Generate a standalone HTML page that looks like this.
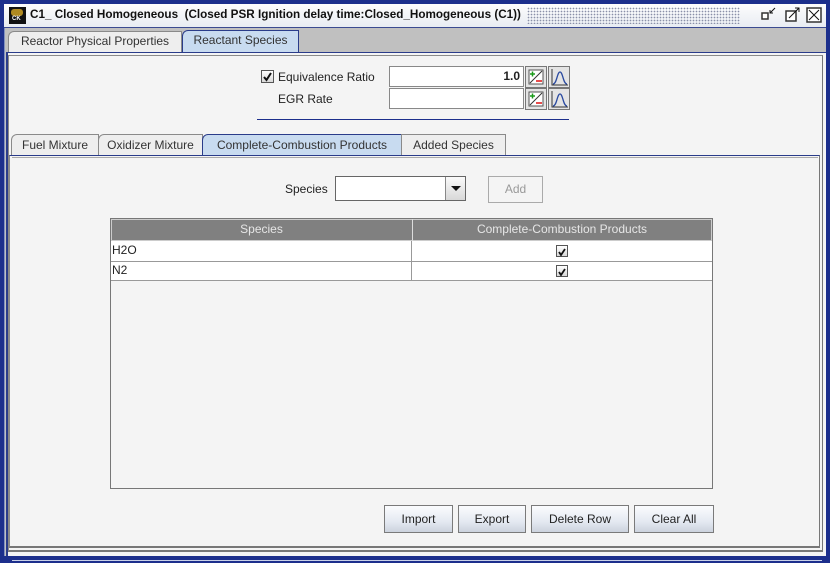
<!DOCTYPE html>
<html><head><meta charset="utf-8"><style>
*{box-sizing:border-box;margin:0;padding:0}
body{width:830px;height:563px;overflow:hidden;background:#1c2f8c;font-family:"Liberation Sans",Arial,sans-serif;font-size:12px;color:#222;position:relative}
.a{position:absolute}
.btn{position:absolute;border:1px solid #7a7a7a;background:linear-gradient(#fbfcfe,#e4e9f1 60%,#ccd3de);text-align:center;color:#222}
.tab{position:absolute;border:1px solid #8a8a8a;border-bottom:none;background:#eeeeee;text-align:center;color:#333;border-top-left-radius:6px 6px}
.cb{position:absolute;width:12px;height:12px;border:1px solid #555;background:linear-gradient(#fff,#d8d8d8)}
</style></head><body>
<div class="a" style="left:4px;top:4px;width:822px;height:553px;background:#c0c0c0;border-left:1px solid #8090c0"></div>
<div class="a" style="left:4px;top:4px;width:822px;height:24px;background:linear-gradient(#fdfdfd,#e8ecf2);border-bottom:1px solid #3a4a90"></div>
<div class="a" style="left:9px;top:7px;width:17px;height:17px;background:#111"><div class="a" style="left:2px;top:2px;width:12px;height:7px;background:#b08a20;border-radius:3px"></div><div class="a" style="left:3px;top:9px;font-size:6px;color:#fff;font-weight:bold">CK</div></div>
<div class="a" style="left:30px;top:8px;font-weight:bold;font-size:11.7px;color:#111;white-space:pre">C1_ Closed Homogeneous  (Closed PSR Ignition delay time:Closed_Homogeneous (C1))</div>
<div class="a" style="left:527px;top:7px;width:213px;height:17px;background-image:radial-gradient(#8a90a8 0.7px,transparent 0.9px);background-size:3px 3px"></div>
<svg class="a" style="left:760px;top:5px" width="65" height="20"><rect x="2" y="8" width="6" height="6" fill="#fff" stroke="#333" stroke-width="1.5"/><path d="M15 3 L10 8 M10 5 V8 H13" stroke="#111" fill="none"/><rect x="26" y="6" width="10" height="10" fill="#fff" stroke="#333" stroke-width="1.5"/><path d="M29 13 L39 3 M35 3 H39 V7" stroke="#111" fill="none"/><rect x="47" y="3" width="14" height="14" fill="#fff" stroke="#333" stroke-width="1.5"/><path d="M49 5 L59 15 M59 5 L49 15" stroke="#111"/></svg>
<div class="tab" style="left:8px;top:31px;width:174px;height:22px;line-height:19px;background:#eee;color:#333">Reactor Physical Properties</div>
<div class="tab" style="left:182px;top:30px;width:117px;height:22px;line-height:19px;background:#c8dbf0;border-color:#2a3c8a">Reactant Species</div>
<div class="a" style="left:6px;top:52px;width:820px;height:504px;background:#f4f4f4;border-top:1px solid #2a3c8a;border-left:2px solid #2a3c8a"></div>
<div class="a" style="left:8px;top:55px;width:815px;height:497px;border:1px solid #8a8a8a;border-right-color:#777;border-bottom:2px solid #777"></div>
<div class="cb" style="left:261px;top:70px;width:13px;height:13px"><svg width="11" height="11"><path d="M2 6 L4.5 9 L9 2" stroke="#111" stroke-width="2" fill="none"/></svg></div>
<div class="a" style="left:278px;top:70px">Equivalence Ratio</div>
<div class="a" style="left:278px;top:92px">EGR Rate</div>
<div class="a" style="left:389px;top:66px;width:135px;height:21px;background:#fff;border:1px solid #888;text-align:right;padding-right:3px;line-height:19px;font-weight:bold">1.0</div>
<div class="a" style="left:389px;top:88px;width:135px;height:21px;background:#fff;border:1px solid #888"></div>
<svg class="a" style="left:525px;top:66px" width="46" height="44">
<g><rect x="0.5" y="0.5" width="21" height="21" fill="#e4e4e4" stroke="#777"/><rect x="4" y="4" width="14" height="14" fill="#fff" stroke="#555"/><path d="M5 17 L17 5" stroke="#333"/><path d="M5 8 H10 M7.5 5.5 V10.5" stroke="#1a9a1a" stroke-width="1.5"/><path d="M11 15 H17" stroke="#e01010" stroke-width="1.5"/>
<rect x="23.5" y="0.5" width="21" height="21" fill="#e4e4e4" stroke="#777"/><path d="M27 3 V19 H43" stroke="#333" fill="none"/><path d="M28 18 C32 18 32 6 35 6 C38 6 38 18 42 18" stroke="#2a4aa0" stroke-width="1.3" fill="none"/></g>
<g transform="translate(0,22)"><rect x="0.5" y="0.5" width="21" height="21" fill="#e4e4e4" stroke="#777"/><rect x="4" y="4" width="14" height="14" fill="#fff" stroke="#555"/><path d="M5 17 L17 5" stroke="#333"/><path d="M5 8 H10 M7.5 5.5 V10.5" stroke="#1a9a1a" stroke-width="1.5"/><path d="M11 15 H17" stroke="#e01010" stroke-width="1.5"/>
<rect x="23.5" y="0.5" width="21" height="21" fill="#e4e4e4" stroke="#777"/><path d="M27 3 V19 H43" stroke="#333" fill="none"/><path d="M28 18 C32 18 32 6 35 6 C38 6 38 18 42 18" stroke="#2a4aa0" stroke-width="1.3" fill="none"/></g>
</svg>
<div class="a" style="left:257px;top:119px;width:312px;height:1px;background:#1c2f8c"></div>
<div class="tab" style="left:11px;top:134px;width:88px;height:22px;line-height:20px">Fuel Mixture</div>
<div class="tab" style="left:98px;top:134px;width:105px;height:22px;line-height:20px">Oxidizer Mixture</div>
<div class="tab" style="left:202px;top:134px;width:200px;height:22px;line-height:20px;background:#c8dbf0;border-color:#2a3c8a">Complete-Combustion Products</div>
<div class="tab" style="left:401px;top:134px;width:105px;height:22px;line-height:20px;border-radius:0">Added Species</div>
<div class="a" style="left:9px;top:155px;width:811px;height:393px;border-top:1px solid #2a3c8a;border-left:1px solid #8a8a8a;border-right:1px solid #777;border-bottom:2px solid #777;background:#f4f4f4"></div>
<div class="a" style="left:12px;top:157px;width:806px;height:1px;background:#aaa"></div>
<div class="a" style="left:285px;top:182px">Species</div>
<div class="a" style="left:335px;top:176px;width:131px;height:25px;background:#fff;border:1px solid #666"></div>
<div class="a" style="left:445px;top:177px;width:20px;height:23px;background:linear-gradient(#fafafa,#d8d8d8);border-left:1px solid #888"><svg width="20" height="23"><path d="M5 9 H15 L10 14 Z" fill="#111"/></svg></div>
<div class="a" style="left:488px;top:176px;width:55px;height:27px;border:1px solid #aaa;background:#f4f4f4;color:#999;text-align:center;line-height:25px">Add</div>
<div class="a" style="left:110px;top:218px;width:603px;height:271px;background:#f4f4f4;border:1px solid #777"></div>
<div class="a" style="left:111px;top:219px;width:601px;height:22px;background:#808080;border:1px solid #ccc"></div>
<div class="a" style="left:412px;top:219px;width:1px;height:22px;background:#ddd"></div>
<div class="a" style="left:111px;top:222px;width:301px;text-align:center;color:#e6e6e6">Species</div>
<div class="a" style="left:412px;top:222px;width:300px;text-align:center;color:#e6e6e6">Complete-Combustion Products</div>
<div class="a" style="left:111px;top:241px;width:601px;height:40px;background:#fff"></div>
<div class="a" style="left:111px;top:261px;width:601px;height:1px;background:#999"></div>
<div class="a" style="left:111px;top:280px;width:601px;height:1px;background:#999"></div>
<div class="a" style="left:411px;top:241px;width:1px;height:40px;background:#999"></div>
<div class="a" style="left:112px;top:243px">H2O</div>
<div class="a" style="left:112px;top:263px">N2</div>
<div class="cb" style="left:556px;top:245px"><svg width="10" height="10"><path d="M2 5 L4 8 L8 2" stroke="#111" stroke-width="1.8" fill="none"/></svg></div>
<div class="cb" style="left:556px;top:265px"><svg width="10" height="10"><path d="M2 5 L4 8 L8 2" stroke="#111" stroke-width="1.8" fill="none"/></svg></div>
<div class="btn" style="left:384px;top:505px;width:69px;height:28px;line-height:26px">Import</div>
<div class="btn" style="left:458px;top:505px;width:68px;height:28px;line-height:26px">Export</div>
<div class="btn" style="left:531px;top:505px;width:98px;height:28px;line-height:26px">Delete Row</div>
<div class="btn" style="left:634px;top:505px;width:80px;height:28px;line-height:26px">Clear All</div>
<div class="a" style="left:4px;top:556px;width:822px;height:7px;background:#1c2f8c"></div>
<div class="a" style="left:12px;top:560px;width:810px;height:1px;background:#c8d0e8"></div>
</body></html>
